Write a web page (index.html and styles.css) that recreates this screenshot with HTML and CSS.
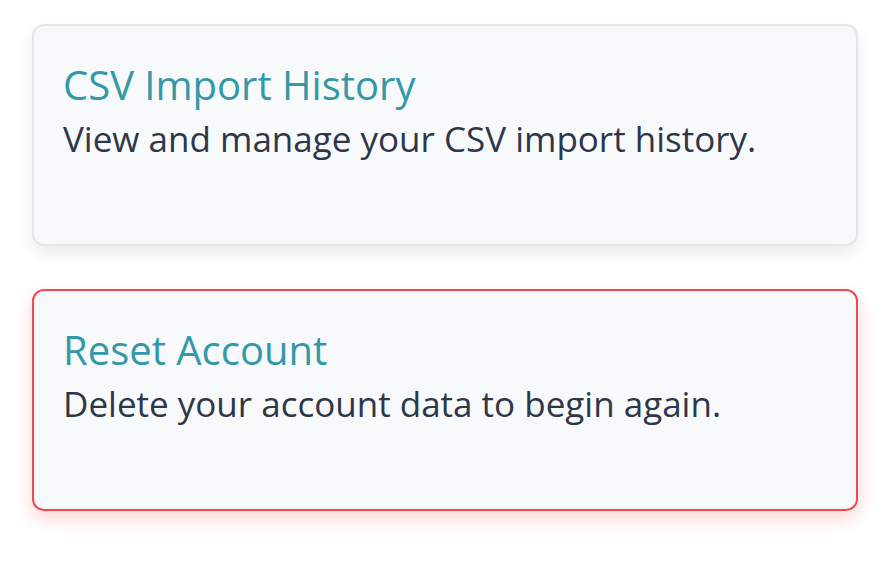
FILE: index.html
```html
<!DOCTYPE html>
<html>
<head>
<meta charset="utf-8">
<link rel="stylesheet" href="styles.css">
</head>
<body>
<div class="page">
  <div class="card">
    <h2 class="card-title">CSV Import History</h2>
    <p class="card-text">View and manage your CSV import history.</p>
  </div>
  <div class="card card-danger">
    <h2 class="card-title">Reset Account</h2>
    <p class="card-text">Delete your account data to begin again.</p>
  </div>
</div>
</body>
</html>
```
FILE: styles.css
```css
html, body {
  margin: 0;
  padding: 0;
  background: #ffffff;
}
body {
  font-family: "Open Sans", "Noto Sans", sans-serif;
  min-height: 572px;
}
.page {
  display: flex;
  flex-direction: column;
  gap: 43px;
  padding: 24px 38px 60px 32px;
}
.card {
  box-sizing: border-box;
  height: 222px;
  background: #f8f9fb;
  border: 2px solid #e3e5e9;
  border-radius: 12px;
  padding: 29px 29px 0 29px;
  box-shadow: 0 8px 16px rgba(0, 0, 0, 0.08);
}
.card-danger {
  border-color: #ef4a4f;
  box-shadow: 0 8px 18px rgba(239, 68, 68, 0.22);
}
.card-title {
  margin: 0;
  font-size: 40px;
  line-height: 60px;
  font-weight: 400;
  color: #3399a6;
}
.card-text {
  margin: 0;
  font-size: 35px;
  line-height: 48px;
  color: #2d3748;
}
```
